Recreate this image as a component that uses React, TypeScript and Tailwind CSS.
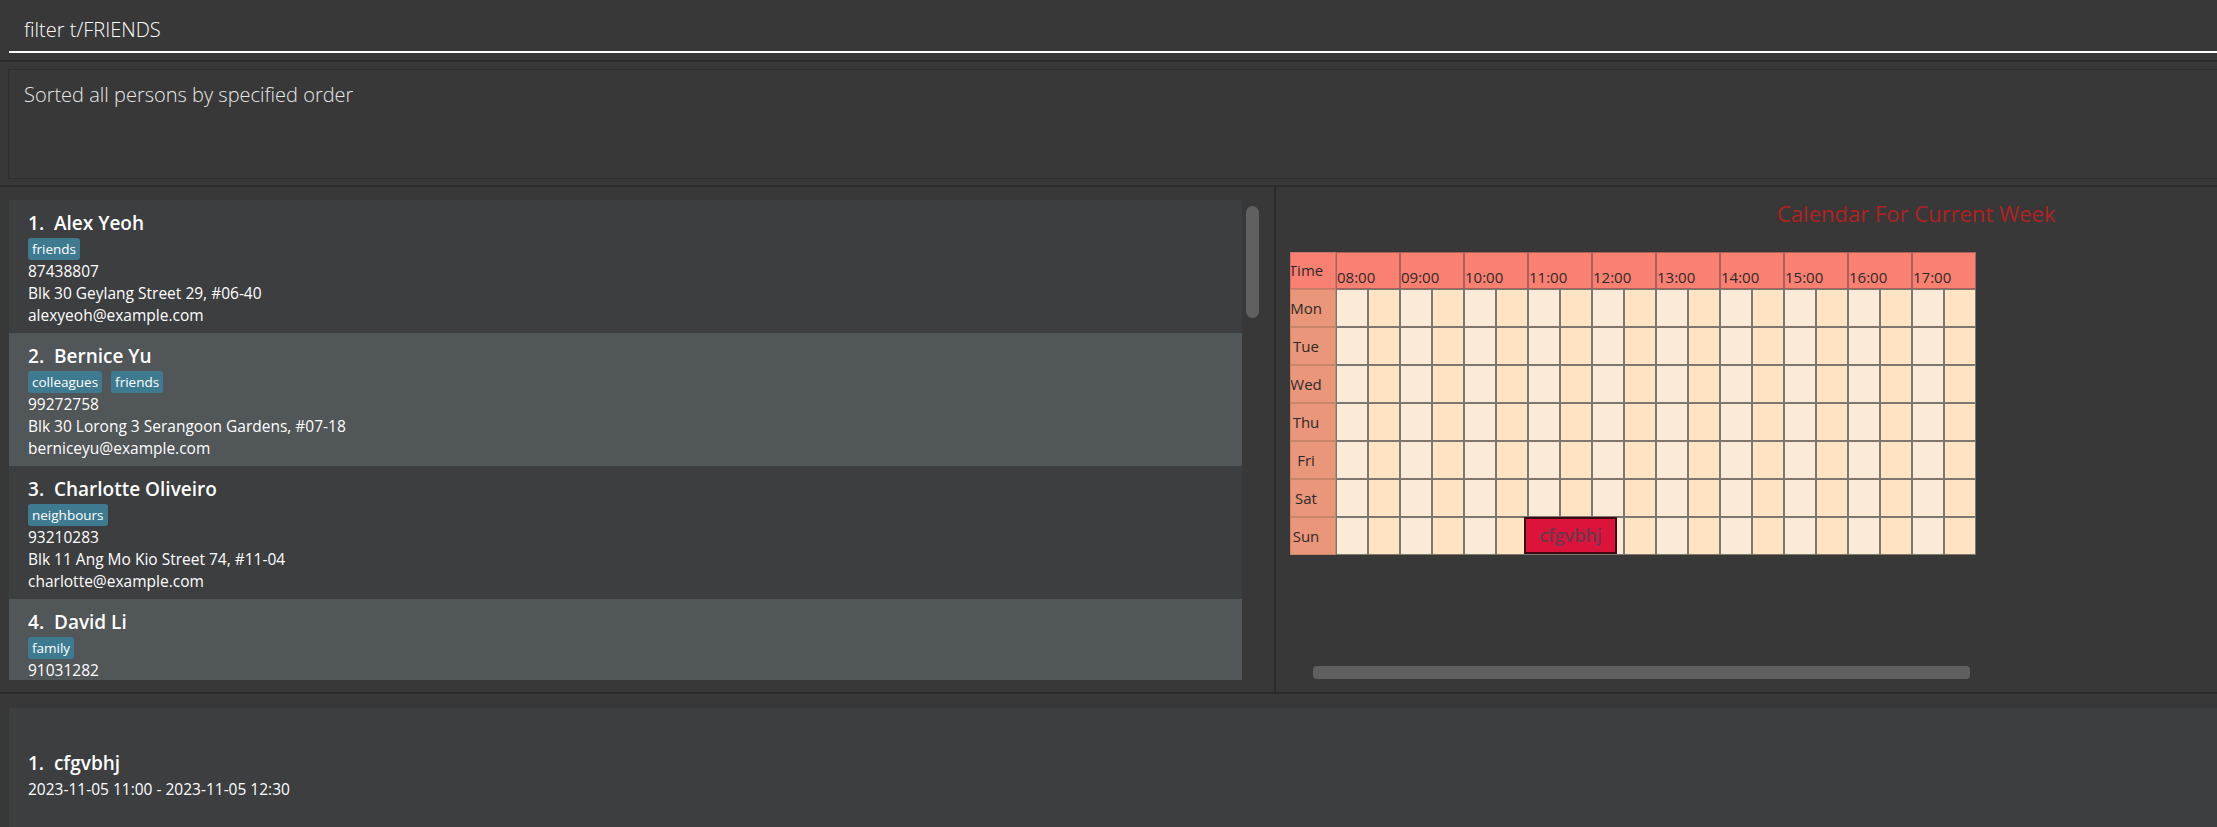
import React from 'react';

type Person = {
  name: string;
  tags: string[];
  phone: string;
  address?: string;
  email?: string;
};

// last card is cut off by the list's bottom edge, only what shows is listed
const persons: Person[] = [
  { name: 'Alex Yeoh', tags: ['friends'], phone: '87438807', address: 'Blk 30 Geylang Street 29, #06-40', email: 'alexyeoh@example.com' },
  { name: 'Bernice Yu', tags: ['colleagues', 'friends'], phone: '99272758', address: 'Blk 30 Lorong 3 Serangoon Gardens, #07-18', email: 'berniceyu@example.com' },
  { name: 'Charlotte Oliveiro', tags: ['neighbours'], phone: '93210283', address: 'Blk 11 Ang Mo Kio Street 74, #11-04', email: 'charlotte@example.com' },
  { name: 'David Li', tags: ['family'], phone: '91031282' },
];

const hours = ['08:00', '09:00', '10:00', '11:00', '12:00', '13:00', '14:00', '15:00', '16:00', '17:00'];
const days = ['Mon', 'Tue', 'Wed', 'Thu', 'Fri', 'Sat', 'Sun'];

const PersonCard: React.FC<{ person: Person; index: number }> = ({ person, index }) => {
  const bg = index % 2 === 0 ? 'bg-[#3c3e3f]' : 'bg-[#515658]';
  return (
    <div className={`${bg} h-[133px] shrink-0 px-[19px] pt-[10px] text-white`}>
      <div className="whitespace-pre text-[19px] font-semibold leading-[26px]">
        {index + 1}.  {person.name}
      </div>
      <div className="mt-[2px] flex gap-[9px]">
        {person.tags.map((t) => (
          <span key={t} className="h-[22px] rounded-[3px] bg-[#3e7b91] px-[4px] text-[13.5px] leading-[22px] text-white">
            {t}
          </span>
        ))}
      </div>
      <div className="mt-[1px] text-[15.5px] leading-[21px]">{person.phone}</div>
      {person.address && <div className="text-[15.5px] leading-[22px]">{person.address}</div>}
      {person.email && <div className="text-[15.5px] leading-[22px]">{person.email}</div>}
    </div>
  );
};

const Calendar: React.FC = () => {
  return (
    <div className="relative grid grid-cols-[46px_repeat(20,32px)] grid-rows-[37px_repeat(7,38px)] text-[15px] text-[#2e2a2a]">
      <div className="flex items-center overflow-hidden border border-[#c9766a] bg-[#fa8072]">
        <div className="flex w-[30px] shrink-0 justify-center whitespace-nowrap">Time</div>
      </div>
      {hours.map((h) => (
        <div key={h} className="col-span-2 flex items-end border border-[#a8625a] bg-[#fa8072] pb-[1px] leading-[20px]">
          {h}
        </div>
      ))}
      {days.map((d) => (
        <React.Fragment key={d}>
          <div className="flex items-center overflow-hidden border border-[#c98568] bg-[#e9967a]">
            <div className="flex w-[30px] shrink-0 justify-center whitespace-nowrap">{d}</div>
          </div>
          {Array.from({ length: 20 }).map((_, i) => (
            <div
              key={i}
              className={`border border-[#7e776f] ${i % 2 === 0 ? 'bg-[#faebd7]' : 'bg-[#ffe4c4]'}`}
            />
          ))}
        </React.Fragment>
      ))}
      <div className="absolute left-[234px] top-[265px] flex h-[37px] w-[93px] items-center justify-center border-2 border-[#3d0a14] bg-[#dc143c] text-[18px] font-semibold text-[#6a3848]">
        cfgvbhj
      </div>
    </div>
  );
};

export default function App() {
  return (
    <div className="flex h-[827px] w-full flex-col overflow-hidden bg-[#383838] font-['Open_Sans','Noto_Sans',sans-serif]">
      {/* command box */}
      <div className="h-[60px] shrink-0 pl-[9px]">
        <div className="flex h-[53px] items-center border-b-2 border-white pl-[15px] pt-[9px] text-[20px] font-light text-white">
          filter t/FRIENDS
        </div>
      </div>
      <div className="h-[2px] shrink-0 bg-[#2b2b2b]" />
      {/* result display */}
      <div className="h-[123px] shrink-0 pt-[7px] pl-[8px]">
        <div className="h-[110px] border border-r-0 border-[#2e2e2e] pl-[15px] pt-[11px] text-[20px] font-light leading-[28px] text-[#e8e8e8]">
          Sorted all persons by specified order
        </div>
      </div>
      <div className="h-[2px] shrink-0 bg-[#2b2b2b]" />

      {/* middle */}
      <div className="flex h-[505px] shrink-0">
        <div className="flex w-[1274px] shrink-0 pl-[9px] pt-[13px]">
          <div className="flex h-[480px] w-[1233px] flex-col overflow-hidden">
            {persons.map((p, i) => (
              <PersonCard key={p.name} person={p} index={i} />
            ))}
          </div>
          <div className="ml-[4px] pt-[6px]">
            <div className="h-[112px] w-[13px] rounded-full bg-[#606060]" />
          </div>
        </div>
        <div className="w-[2px] shrink-0 bg-[#2b2b2b]" />
        <div className="flex flex-1 flex-col">
          <div className="pl-[501px] pt-[11px] text-[22px] leading-[30px] text-[#b22222]">
            Calendar For Current Week
          </div>
          <div className="mt-[24px] pl-[14px]">
            <Calendar />
          </div>
          <div className="ml-[37px] mt-[111px] h-[13px] w-[657px] rounded-[4px] bg-[#5f5f5f]" />
        </div>
      </div>
      <div className="h-[2px] shrink-0 bg-[#2b2b2b]" />

      {/* events */}
      <div className="flex flex-1 flex-col pl-[9px] pt-[14px]">
        <div className="flex-1 bg-[#3c3e3f] pl-[19px] pt-[42px] text-white">
          <div className="whitespace-pre text-[19px] font-semibold leading-[26px]">1.  cfgvbhj</div>
          <div className="mt-[2px] text-[15.5px] leading-[22px]">2023-11-05 11:00 - 2023-11-05 12:30</div>
        </div>
      </div>
    </div>
  );
}
